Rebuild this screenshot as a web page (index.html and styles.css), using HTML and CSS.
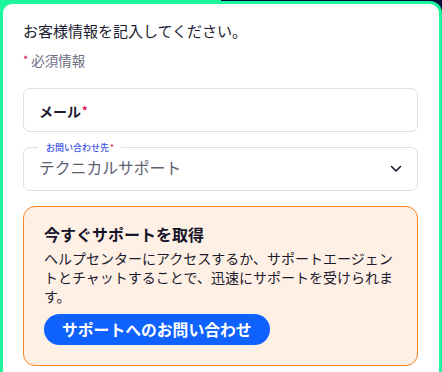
FILE: index.html
```html
<!DOCTYPE html>
<html lang="ja">
<head>
<meta charset="utf-8">
<link rel="stylesheet" href="styles.css">
</head>
<body>
<div class="corner-strip"></div>
<main class="card">
  <h1 class="title">お客様情報を記入してください。</h1>
  <p class="required-note"><span class="req">*</span> 必須情報</p>

  <div class="field field-email">
    <span class="field-label">メール<span class="req">*</span></span>
  </div>

  <fieldset class="field field-select">
    <legend class="legend">お問い合わせ先<span class="req">*</span></legend>
    <span class="select-value">テクニカルサポート</span>
    <svg class="chevron" width="12" height="8" viewBox="0 0 12 8" aria-hidden="true">
      <path d="M1.5 1.5 L6 6 L10.5 1.5" fill="none" stroke="#1b1b2f" stroke-width="1.6" stroke-linecap="round" stroke-linejoin="round"/>
    </svg>
  </fieldset>

  <section class="support">
    <h2 class="support-title">今すぐサポートを取得</h2>
    <p class="support-text">ヘルプセンターにアクセスするか、サポートエージェントとチャットすることで、迅速にサポートを受けられます。</p>
    <button class="support-btn" type="button">サポートへのお問い合わせ</button>
  </section>
</main>
</body>
</html>
```

FILE: styles.css
```css
html, body {
  margin: 0;
  padding: 0;
}
body {
  background: #1cf59c;
  font-family: "Noto Sans CJK JP", "Noto Sans", sans-serif;
  color: #1b1b2f;
  width: 442px;
  height: 372px;
  overflow: hidden;
  position: relative;
}
.corner-strip {
  position: absolute;
  top: 0;
  right: 0;
  width: 221px;
  height: 14px;
  background: #0b0b3b;
}
.card {
  position: relative;
  margin-top: 1px;
  width: 442px;
  height: 371px;
  box-sizing: border-box;
  background: #ffffff;
  border: 3px solid #1cf59c;
  border-bottom-width: 0;
  border-radius: 12px 12px 0 0;
  padding: 16px 20px 0 20px;
}
.title {
  margin: 0;
  font-size: 15px;
  font-weight: 400;
  line-height: 22px;
  color: #1b1b2f;
}
.required-note {
  margin: 6px 0 0 0;
  font-size: 13.5px;
  line-height: 22px;
  color: #6e6e82;
}
.req {
  color: #e0004d;
  font-size: 11px;
  vertical-align: 2px;
  margin-left: 1px;
}
.required-note .req {
  margin-left: 0;
}
.field {
  box-sizing: border-box;
  border: 1px solid #dedee6;
  border-radius: 7px;
  width: 395px;
}
.field-email {
  margin-top: 17px;
  height: 44px;
  display: flex;
  align-items: center;
  padding: 2px 15px 0 15px;
}
.field-label {
  font-size: 14px;
  font-weight: 700;
  color: #1b1b2f;
}
.field-select {
  margin: 10px 0 0 0;
  padding: 0 14px 0 15px;
  height: 49px;
  min-width: 0;
  display: flex;
  align-items: center;
  justify-content: space-between;
}
.legend {
  margin-left: -1px;
  padding: 0 7px 0 8px;
  font-size: 9px;
  line-height: 9px;
  font-weight: 500;
  color: #3b55e6;
}
.legend .req {
  font-size: 8px;
  vertical-align: 1px;
}
.select-value {
  font-size: 15.8px;
  color: #5e5e72;
  line-height: 22px;
  margin-top: -6px;
}
.chevron {
  margin-top: -4px;
  margin-right: 1px;
}
.support {
  margin-top: 15px;
  width: 395px;
  box-sizing: border-box;
  background: #fff0e6;
  border: 1px solid #f7841f;
  border-radius: 12px;
  padding: 16px 20px 20px 20px;
}
.support-title {
  margin: 0;
  font-size: 16px;
  font-weight: 700;
  line-height: 22px;
  color: #16162a;
}
.support-text {
  margin: 4px 0 0 0;
  font-size: 14px;
  line-height: 19px;
  color: #1b1b2f;
}
.support-btn {
  margin-top: 8px;
  height: 31px;
  padding: 0 18px;
  border: none;
  border-radius: 16px;
  background: #0f62fe;
  color: #ffffff;
  font-family: "Noto Sans CJK JP", "Noto Sans", sans-serif;
  font-size: 15.8px;
  font-weight: 700;
  line-height: 31px;
}
```
